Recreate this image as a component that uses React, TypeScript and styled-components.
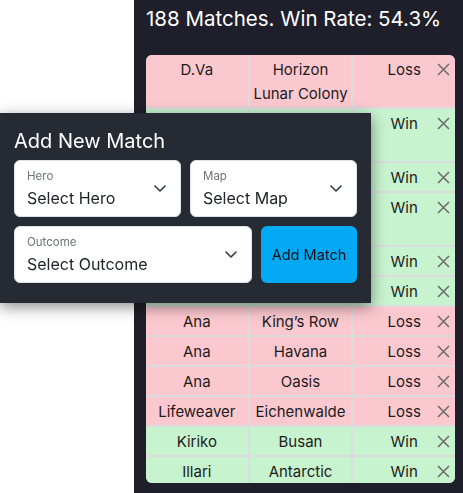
import React, { FC } from 'react';
import styled, { createGlobalStyle } from 'styled-components';

type Result = 'Win' | 'Loss';

interface Match {
  hero: string;
  map: string;
  result: Result;
}

const matches: Match[] = [
  { hero: 'D.Va', map: 'Horizon Lunar Colony', result: 'Loss' },
  { hero: 'Mercy', map: 'Watchpoint: Gibraltar', result: 'Win' },
  { hero: 'Lúcio', map: 'Ilios', result: 'Win' },
  { hero: 'Kiriko', map: 'Temple of Anubis', result: 'Win' },
  { hero: 'Ana', map: 'Nepal', result: 'Win' },
  { hero: 'Illari', map: 'Dorado', result: 'Win' },
  { hero: 'Ana', map: 'King’s Row', result: 'Loss' },
  { hero: 'Ana', map: 'Havana', result: 'Loss' },
  { hero: 'Ana', map: 'Oasis', result: 'Loss' },
  { hero: 'Lifeweaver', map: 'Eichenwalde', result: 'Loss' },
  { hero: 'Kiriko', map: 'Busan', result: 'Win' },
  { hero: 'Illari', map: 'Antarctic', result: 'Win' },
  { hero: 'Mercy', map: 'Route 66', result: 'Loss' },
];

const GlobalStyle = createGlobalStyle`
  * { box-sizing: border-box; }
  html, body {
    margin: 0;
    background: #ffffff;
    font-family: 'Inter', 'Noto Sans', sans-serif;
  }
`;

const Chevron: FC = () => (
  <ChevronIcon width="12" height="7" viewBox="0 0 12 7" fill="none">
    <path d="M1 1l5 5 5-5" stroke="#343a40" strokeWidth="1.6" strokeLinecap="round" strokeLinejoin="round" />
  </ChevronIcon>
);

const CrossIcon: FC = () => (
  <svg width="13" height="13" viewBox="0 0 13 13" fill="none">
    <path d="M1 1l11 11M12 1L1 12" stroke="#6b6b6b" strokeWidth="1.5" />
  </svg>
);

const SelectField: FC<{ label: string; placeholder: string }> = ({ label, placeholder }) => (
  <Field>
    <Select defaultValue="">
      <option value="">{placeholder}</option>
    </Select>
    <FieldLabel>{label}</FieldLabel>
    <Chevron />
  </Field>
);

const App: FC = () => {
  return (
    <>
      <GlobalStyle />
      <Page>
        <Panel>
          <Summary>188 Matches. Win Rate: 54.3%</Summary>
          <MatchTable>
            {matches.map((m, i) => (
              <React.Fragment key={i}>
                <Cell $result={m.result}>{m.hero}</Cell>
                <Cell $result={m.result}>{m.map}</Cell>
                <OutcomeCell $result={m.result}>
                  {m.result}
                  <DeleteButton aria-label="Delete match">
                    <CrossIcon />
                  </DeleteButton>
                </OutcomeCell>
              </React.Fragment>
            ))}
          </MatchTable>
        </Panel>
      </Page>

      <Modal>
        <ModalTitle>Add New Match</ModalTitle>
        <FieldRow>
          <SelectField label="Hero" placeholder="Select Hero" />
          <SelectField label="Map" placeholder="Select Map" />
        </FieldRow>
        <FieldRow>
          <SelectField label="Outcome" placeholder="Select Outcome" />
          <AddButton>Add Match</AddButton>
        </FieldRow>
      </Modal>
    </>
  );
};

const Page = styled.div`
  display: flex;
  height: 100vh;
`;

const Panel = styled.main`
  margin-left: 134px;
  flex: 1;
  display: flex;
  flex-direction: column;
  min-width: 0;
  padding: 7px 8px 10px 12px;
  background: #1f1f2b;
`;

const Summary = styled.h2`
  margin: 0 0 24px;
  font-size: 20.5px;
  line-height: 24px;
  font-weight: 400;
  color: #ffffff;
  white-space: nowrap;
`;

const MatchTable = styled.div`
  flex: 1;
  min-height: 0;
  display: grid;
  grid-template-columns: repeat(3, 1fr);
  align-content: start;
  gap: 2px;
  overflow: hidden;
  border-radius: 6px;
  background: #dcdcdf;
`;

const Cell = styled.div<{ $result: Result }>`
  padding: 3px 3px 1px;
  font-size: 15px;
  line-height: 24px;
  text-align: center;
  color: #1c1c1c;
  background: ${p => (p.$result === 'Win' ? '#c8f3cf' : '#fcc8cf')};
`;

const OutcomeCell = styled(Cell)`
  position: relative;
`;

const DeleteButton = styled.button`
  position: absolute;
  top: 8px;
  right: 5px;
  padding: 0;
  border: none;
  background: none;
  line-height: 0;
  cursor: pointer;
`;

const Modal = styled.section`
  position: fixed;
  top: 113px;
  left: 0;
  width: 371px;
  padding: 16px 14px 20px;
  background: #262a33;
  box-shadow: 0 4px 14px rgba(0, 0, 0, 0.45);
`;

const ModalTitle = styled.h3`
  margin: 0 0 7px;
  font-size: 20px;
  line-height: 24px;
  font-weight: 400;
  color: #ffffff;
`;

const FieldRow = styled.div`
  display: flex;
  gap: 9px;

  & + & {
    margin-top: 9px;
  }
`;

const Field = styled.div`
  position: relative;
  flex: 1;
  min-width: 0;
`;

const Select = styled.select`
  display: block;
  width: 100%;
  height: 57px;
  padding: 24px 36px 6px 12px;
  border: 1px solid #dee2e6;
  border-radius: 6px;
  background: #ffffff;
  appearance: none;
  font-family: 'Inter', sans-serif;
  font-size: 16px;
  color: #212529;
  outline: none;
`;

const FieldLabel = styled.label`
  position: absolute;
  top: 9px;
  left: 13px;
  font-size: 11.5px;
  line-height: 14px;
  color: #6f7377;
  pointer-events: none;
`;

const ChevronIcon = styled.svg`
  position: absolute;
  right: 15px;
  top: 25px;
  pointer-events: none;
`;

const AddButton = styled.button`
  width: 96px;
  flex-shrink: 0;
  height: 57px;
  border: none;
  border-radius: 6px;
  background: #03a9f4;
  font-family: 'Inter', sans-serif;
  font-size: 14.5px;
  color: #111111;
  cursor: pointer;
`;

export default App;
